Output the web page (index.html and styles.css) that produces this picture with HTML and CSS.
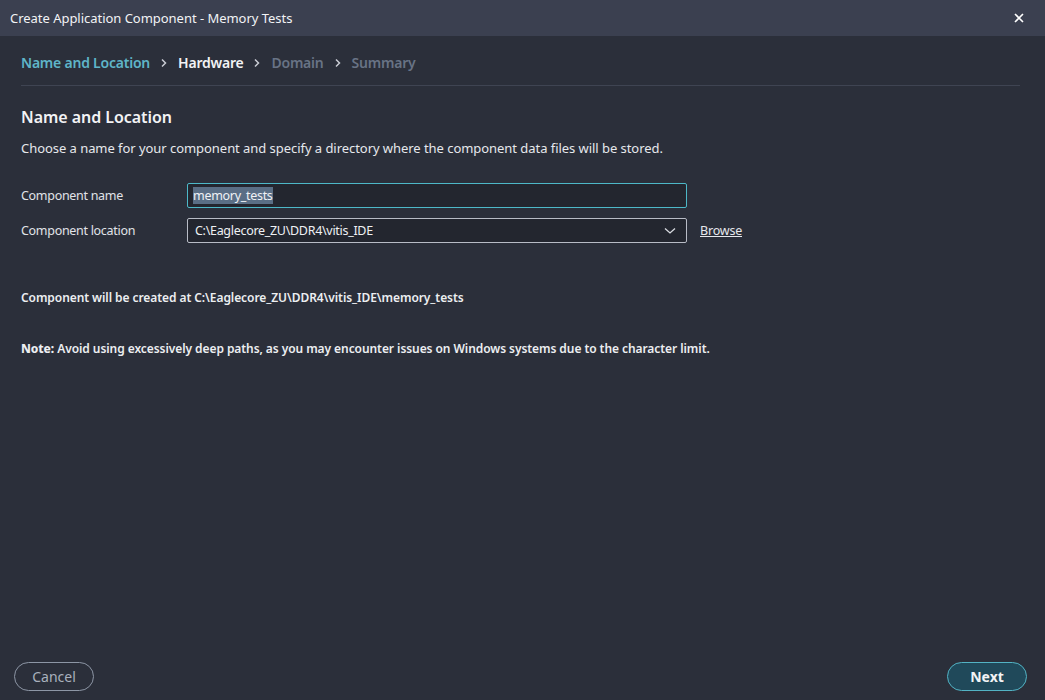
FILE: index.html
```html
<!DOCTYPE html>
<html>
<head>
<meta charset="utf-8">
<link rel="stylesheet" href="styles.css">
</head>
<body>
<div class="dialog">
  <div class="titlebar">
    <span class="title">Create Application Component - Memory Tests</span>
    <svg class="close" width="10" height="10" viewBox="0 0 10 10"><path d="M1 1L9 9M9 1L1 9" stroke="#ffffff" stroke-width="1.6"/></svg>
  </div>
  <div class="content">
    <nav class="crumbs">
      <span class="crumb done">Name and Location</span>
      <svg class="chev" width="8" height="10" viewBox="0 0 8 10"><path d="M2 1.5L5.5 5L2 8.5" fill="none" stroke="#c9ccd3" stroke-width="1.5"/></svg>
      <span class="crumb current">Hardware</span>
      <svg class="chev" width="8" height="10" viewBox="0 0 8 10"><path d="M2 1.5L5.5 5L2 8.5" fill="none" stroke="#c9ccd3" stroke-width="1.5"/></svg>
      <span class="crumb todo">Domain</span>
      <svg class="chev" width="8" height="10" viewBox="0 0 8 10"><path d="M2 1.5L5.5 5L2 8.5" fill="none" stroke="#c9ccd3" stroke-width="1.5"/></svg>
      <span class="crumb todo">Summary</span>
    </nav>
    <h2 class="heading">Name and Location</h2>
    <p class="desc">Choose a name for your component and specify a directory where the component data files will be stored.</p>
    <div class="form">
      <label class="label">Component name</label>
      <div class="input focused"><span class="sel">memory_tests</span></div>
      <span></span>
      <label class="label">Component location</label>
      <div class="input select"><span>C:\Eaglecore_ZU\DDR4\vitis_IDE</span>
        <svg class="dd" width="12" height="8" viewBox="0 0 12 8"><path d="M1 1.5L6 6L11 1.5" fill="none" stroke="#d8dbe0" stroke-width="1.3"/></svg>
      </div>
      <a class="browse">Browse</a>
    </div>
    <p class="info">Component will be created at C:\Eaglecore_ZU\DDR4\vitis_IDE\memory_tests</p>
    <p class="note"><b>Note:</b> Avoid using excessively deep paths, as you may encounter issues on Windows systems due to the character limit.</p>
  </div>
  <div class="footer">
    <button class="btn cancel">Cancel</button>
    <button class="btn next">Next</button>
  </div>
</div>
</body>
</html>
```
FILE: styles.css
```css
* { box-sizing: border-box; }
html, body { margin: 0; padding: 0; }
body {
  width: 1045px;
  height: 700px;
  background: #2b2f3a;
  font-family: "Noto Sans", "Open Sans", sans-serif;
  color: #e6e8ec;
  overflow: hidden;
}
.dialog {
  height: 700px;
  display: flex;
  flex-direction: column;
}
.titlebar {
  height: 36px;
  background: #3b4050;
  display: flex;
  align-items: center;
  justify-content: space-between;
  padding: 0 21px 0 10px;
  flex-shrink: 0;
}
.title {
  font-size: 13px;
  color: #f2f3f5;
  letter-spacing: -0.03px;
}
.close { display: block; }
.content {
  flex: 1;
  padding: 0 25px 0 21px;
}
.crumbs {
  display: flex;
  align-items: center;
  gap: 10px;
  height: 50px;
  padding-top: 4px;
  border-bottom: 1px solid #3f4452;
  font-size: 14px;
  font-weight: 600;
  letter-spacing: -0.22px;
}
.chev { display: block; margin-top: 1px; }
.crumb.done { color: #5fb5c8; }
.crumb.current { color: #f2f3f5; }
.crumb.todo { color: #687385; }
.heading {
  margin: 20px 0 0;
  font-size: 16px;
  font-weight: 600;
  line-height: 22px;
  color: #f2f3f5;
  letter-spacing: -0.05px;
}
.desc {
  margin: 10px 0 0;
  font-size: 13px;
  line-height: 20px;
  color: #e6e8ec;
  letter-spacing: -0.05px;
}
.form {
  margin-top: 25px;
  display: grid;
  grid-template-columns: 153px 500px auto;
  column-gap: 13px;
  row-gap: 10px;
  align-items: center;
}
.label {
  font-size: 12.5px;
  color: #e1e3e8;
  letter-spacing: -0.3px;
}
.input {
  height: 25px;
  background: #23262f;
  border: 1px solid #b8bcc6;
  border-radius: 2px;
  display: flex;
  align-items: center;
  padding: 0 6px;
  font-size: 12.5px;
  color: #eef0f3;
  letter-spacing: -0.3px;
}
.input.focused {
  border-color: #4db8c8;
  padding-left: 5px;
}
.sel {
  background: #5a6e85;
  color: #f0f2f5;
  line-height: 17px;
}
.input.select {
  justify-content: space-between;
  padding-right: 10px;
  padding-left: 7px;
}
.dd { display: block; }
.browse {
  font-size: 12.5px;
  color: #e6e8ec;
  text-decoration: underline;
  letter-spacing: -0.2px;
}
.info {
  margin: 47px 0 0;
  font-size: 12px;
  font-weight: 600;
  line-height: 16px;
  color: #eceef1;
  letter-spacing: -0.07px;
}
.note {
  margin: 35px 0 0;
  font-size: 12px;
  font-weight: 600;
  line-height: 16px;
  color: #eceef1;
  letter-spacing: -0.07px;
}
.note b { font-weight: 800; }
.footer {
  display: flex;
  justify-content: space-between;
  padding: 0 18px 9px 14px;
}
.btn {
  width: 80px;
  height: 29px;
  border-radius: 15px;
  font-family: "Noto Sans", "Open Sans", sans-serif;
  font-size: 14px;
  background: transparent;
}
.cancel {
  border: 1px solid #8d96a5;
  color: #a9b1bd;
}
.next {
  border: 1px solid #53b3c4;
  background: #20495a;
  color: #f2f3f5;
  font-weight: 700;
}
```
